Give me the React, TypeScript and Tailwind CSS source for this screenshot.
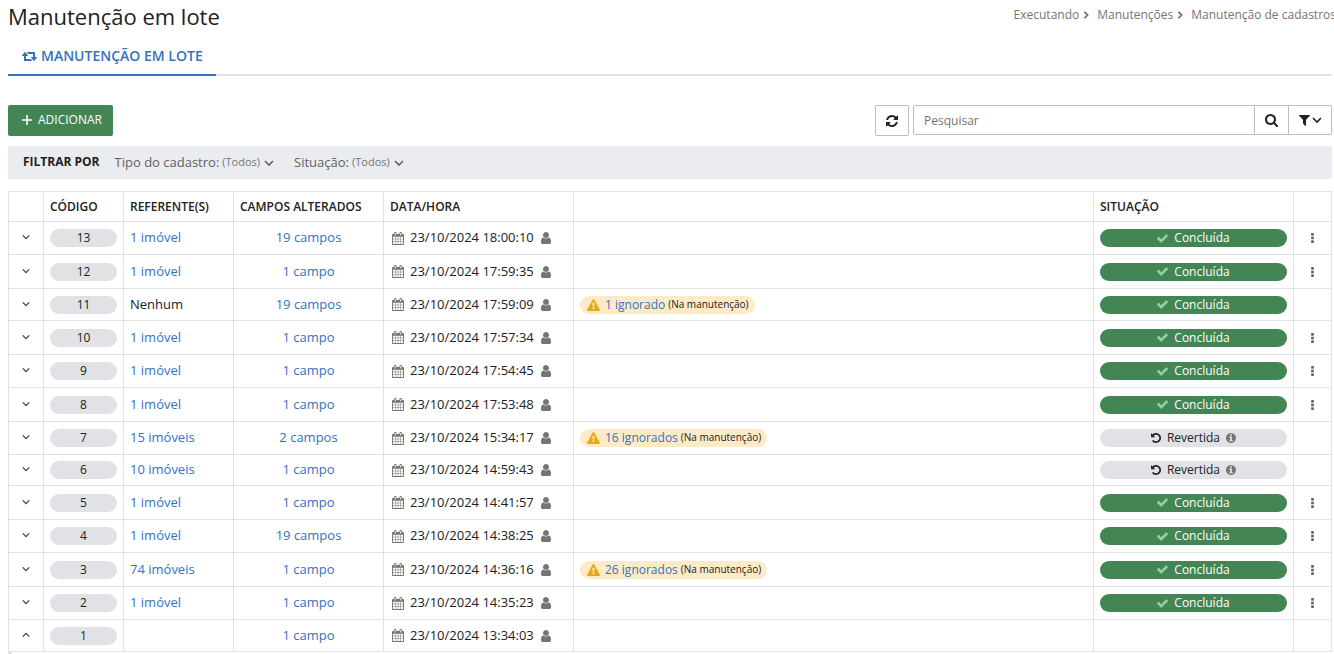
import { useState } from 'react';
import clsx from 'clsx';

const ICONS = {
  retweet: {
    box: '0 256 1920 1408',
    d: 'M1280 1632q0 13-9.5 22.5t-22.5 9.5h-960q-8 0-13.5-2t-9-7-5.5-8-3-11.5-1-11.5v-600h-192q-26 0-45-19t-19-45q0-24 15-41l320-384q19-22 49-22t49 22l320 384q15 17 15 41 0 26-19 45t-45 19h-192v384h576q16 0 25 11l160 192q7 11 7 21zm640-416q0 24-15 41l-320 384q-20 23-49 23t-49-23l-320-384q-15-17-15-41 0-26 19-45t45-19h192v-384h-576q-16 0-25-12l-160-192q-7-9-7-20 0-13 9.5-22.5t22.5-9.5h960q8 0 13.5 2t9 7 5.5 8 3 11.5 1 11.5v600h192q26 0 45 19t19 45z',
  },
  refresh: {
    box: '128 128 1536 1536',
    d: 'M1639 1056q0 5-1 7-64 268-268 434.5t-478 166.5q-146 0-282.5-55t-243.5-157l-129 129q-19 19-45 19t-45-19-19-45v-448q0-26 19-45t45-19h448q26 0 45 19t19 45-19 45l-137 137q71 66 161 102t187 36q134 0 250-65t186-179q11-17 53-117 8-23 30-23h192q13 0 22.5 9.5t9.5 22.5zm25-800v448q0 26-19 45t-45 19h-448q-26 0-45-19t-19-45 19-45l138-138q-148-137-349-137-134 0-250 65t-186 179q-11 17-53 117-8 23-30 23h-199q-13 0-22.5-9.5t-9.5-22.5v-7q65-268 270-434.5t480-166.5q146 0 284 55.5t245 156.5l130-129q19-19 45-19t45 19 19 45z',
  },
  search: {
    box: '64 128 1664 1664',
    d: 'M1216 832q0-185-131.5-316.5t-316.5-131.5-316.5 131.5-131.5 316.5 131.5 316.5 316.5 131.5 316.5-131.5 131.5-316.5zm512 832q0 52-38 90t-90 38q-54 0-90-38l-343-342q-179 124-399 124-143 0-273.5-55.5t-225-150-150-225-55.5-273.5 55.5-273.5 150-225 225-150 273.5-55.5 273.5 55.5 225 150 150 225 55.5 273.5q0 220-124 399l343 343q37 37 37 90z',
  },
  filter: {
    box: '192 256 1408 1408',
    d: 'M1595 295q17 41-14 70l-493 493v742q0 42-39 59-13 5-25 5-27 0-45-19l-256-256q-19-19-19-45v-486l-493-493q-31-29-14-70 17-39 59-39h1280q42 0 59 39z',
  },
  calendar: {
    box: '64 0 1664 1792',
    d: 'M192 1664h288v-288h-288v288zm352 0h320v-288h-320v288zm-352-352h288v-320h-288v320zm352 0h320v-320h-320v320zm-352-384h288v-288h-288v288zm736 736h320v-288h-320v288zm-384-736h320v-288h-320v288zm768 736h288v-288h-288v288zm-384-352h320v-320h-320v320zm-352-864v-288q0-13-9.5-22.5t-22.5-9.5h-64q-13 0-22.5 9.5t-9.5 22.5v288q0 13 9.5 22.5t22.5 9.5h64q13 0 22.5-9.5t9.5-22.5zm736 864h288v-320h-288v320zm-384-384h320v-288h-320v288zm384 0h288v-288h-288v288zm32-480v-288q0-13-9.5-22.5t-22.5-9.5h-64q-13 0-22.5 9.5t-9.5 22.5v288q0 13 9.5 22.5t22.5 9.5h64q13 0 22.5-9.5t9.5-22.5zm384-64v1280q0 52-38 90t-90 38h-1408q-52 0-90-38t-38-90v-1280q0-52 38-90t90-38h128v-96q0-66 47-113t113-47h64q66 0 113 47t47 113v96h384v-96q0-66 47-113t113-47h64q66 0 113 47t47 113v96h128q52 0 90 38t38 90z',
  },
  user: {
    box: '256 128 1280 1536',
    d: 'M1536 1399q0 109-62.5 187t-150.5 78h-854q-88 0-150.5-78t-62.5-187q0-85 8.5-160.5t31.5-152 58.5-131 94-89 134.5-34.5q131 128 313 128t313-128q76 0 134.5 34.5t94 89 58.5 131 31.5 152 8.5 160.5zm-256-887q0 159-112.5 271.5t-271.5 112.5-271.5-112.5-112.5-271.5 112.5-271.5 271.5-112.5 271.5 112.5 112.5 271.5z',
  },
  warning: {
    box: '0 0 1792 1664',
    d: 'M1024 1375v-190q0-14-9.5-23.5t-22.5-9.5h-192q-13 0-22.5 9.5t-9.5 23.5v190q0 14 9.5 23.5t22.5 9.5h192q13 0 22.5-9.5t9.5-23.5zm-2-374l18-459q0-12-10-19-13-11-24-11h-220q-11 0-24 11-10 7-10 21l17 457q0 10 10 16.5t24 6.5h185q14 0 23.5-6.5t10.5-16.5zm-14-934l768 1408q35 63-2 126-17 29-46.5 46t-63.5 17h-1536q-34 0-63.5-17t-46.5-46q-37-63-2-126l768-1408q17-31 47-49t65-18 65 18 47 49z',
  },
  check: {
    box: '120 330 1552 1200',
    d: 'M1671 566q0 40-28 68l-724 724-136 136q-28 28-68 28t-68-28l-136-136-362-362q-28-28-28-68t28-68l136-136q28-28 68-28t68 28l294 295 656-657q28-28 68-28t68 28l136 136q28 28 28 68z',
  },
  undo: {
    box: '128 128 1536 1536',
    d: 'M1664 896q0 156-61 298t-164 245-245 164-298 61q-172 0-327-72.5t-264-204.5q-7-10-6.5-22.5t8.5-20.5l137-138q10-9 25-9 16 2 23 12 73 95 179 147t225 52q104 0 198.5-40.5t163.5-109.5 109.5-163.5 40.5-198.5-40.5-198.5-109.5-163.5-163.5-109.5-198.5-40.5q-98 0-188 35.5t-160 101.5l137 138q31 30 14 69-17 40-59 40h-448q-26 0-45-19t-19-45v-448q0-42 40-59 39-17 69 14l130 129q107-101 244.5-156.5t284.5-55.5q156 0 298 61t245 164 164 245 61 298z',
  },
  info: {
    box: '128 128 1536 1536',
    d: 'M1152 1376v-160q0-14-9-23t-23-9h-96v-512q0-14-9-23t-23-9h-320q-14 0-23 9t-9 23v160q0 14 9 23t23 9h96v320h-96q-14 0-23 9t-9 23v160q0 14 9 23t23 9h448q14 0 23-9t9-23zm-128-896v-160q0-14-9-23t-23-9h-192q-14 0-23 9t-9 23v160q0 14 9 23t23 9h192q14 0 23-9t9-23zm640 416q0 209-103 385.5t-279.5 279.5-385.5 103-385.5-103-279.5-279.5-103-385.5 103-385.5 279.5-279.5 385.5-103 385.5 103 279.5 279.5 103 385.5z',
  },
  ellipsis: {
    box: '704 128 384 1408',
    d: 'M1088 1248v192q0 40-28 68t-68 28h-192q-40 0-68-28t-28-68v-192q0-40 28-68t68-28h192q40 0 68 28t28 68zm0-512v192q0 40-28 68t-68 28h-192q-40 0-68-28t-28-68v-192q0-40 28-68t68-28h192q40 0 68 28t28 68zm0-512v192q0 40-28 68t-68 28h-192q-40 0-68-28t-28-68v-192q0-40 28-68t68-28h192q40 0 68 28t28 68z',
  },
};

const Icon = ({ name, className }: { name: keyof typeof ICONS; className?: string }) => (
  <svg viewBox={ICONS[name].box} fill="currentColor" className={clsx('shrink-0', className)} aria-hidden="true">
    <path d={ICONS[name].d} />
  </svg>
);

const CHEVRONS = {
  down: 'M1 3l4 4 4-4',
  up: 'M1 7l4-4 4 4',
  right: 'M3 1l4 4-4 4',
};

const Chevron = ({ dir, className }: { dir: keyof typeof CHEVRONS; className?: string }) => (
  <svg viewBox="0 0 10 10" fill="none" stroke="currentColor" strokeWidth="1.6" className={clsx('shrink-0', className)} aria-hidden="true">
    <path d={CHEVRONS[dir]} />
  </svg>
);

type Row = {
  code: number;
  ref: string;
  fields: string;
  date: string;
  ignored?: string;
  status?: 'done' | 'reverted';
  menu?: boolean;
  height: string;
};

const rows: Row[] = [
  { code: 13, ref: '1 imóvel', fields: '19 campos', date: '23/10/2024 18:00:10', status: 'done', menu: true, height: 'h-[33px]' },
  { code: 12, ref: '1 imóvel', fields: '1 campo', date: '23/10/2024 17:59:35', status: 'done', menu: true, height: 'h-[34px]' },
  { code: 11, ref: 'Nenhum', fields: '19 campos', date: '23/10/2024 17:59:09', ignored: '1 ignorado', status: 'done', height: 'h-8' },
  { code: 10, ref: '1 imóvel', fields: '1 campo', date: '23/10/2024 17:57:34', status: 'done', menu: true, height: 'h-[34px]' },
  { code: 9, ref: '1 imóvel', fields: '1 campo', date: '23/10/2024 17:54:45', status: 'done', menu: true, height: 'h-[33px]' },
  { code: 8, ref: '1 imóvel', fields: '1 campo', date: '23/10/2024 17:53:48', status: 'done', menu: true, height: 'h-[34px]' },
  { code: 7, ref: '15 imóveis', fields: '2 campos', date: '23/10/2024 15:34:17', ignored: '16 ignorados', status: 'reverted', height: 'h-[33px]' },
  { code: 6, ref: '10 imóveis', fields: '1 campo', date: '23/10/2024 14:59:43', status: 'reverted', height: 'h-[31px]' },
  { code: 5, ref: '1 imóvel', fields: '1 campo', date: '23/10/2024 14:41:57', status: 'done', menu: true, height: 'h-[34px]' },
  { code: 4, ref: '1 imóvel', fields: '19 campos', date: '23/10/2024 14:38:25', status: 'done', menu: true, height: 'h-[33px]' },
  { code: 3, ref: '74 imóveis', fields: '1 campo', date: '23/10/2024 14:36:16', ignored: '26 ignorados', status: 'done', menu: true, height: 'h-[34px]' },
  { code: 2, ref: '1 imóvel', fields: '1 campo', date: '23/10/2024 14:35:23', status: 'done', menu: true, height: 'h-[33px]' },
  { code: 1, ref: '', fields: '1 campo', date: '23/10/2024 13:34:03', height: 'h-8' },
];

const StatusBadge = ({ status }: { status: 'done' | 'reverted' }) =>
  status === 'done' ? (
    <div className="flex h-[18px] items-center justify-center gap-[6px] rounded-full bg-[#438553] text-xs text-white">
      <Icon name="check" className="h-[9px] w-[11px] text-[#8fd19e]" />
      Concluída
    </div>
  ) : (
    <div className="flex h-[18px] items-center justify-center gap-[6px] rounded-full bg-[#e1e2e6] text-xs text-[#212121]">
      <Icon name="undo" className="size-[10px]" />
      Revertida
      <Icon name="info" className="size-[10px] text-[#757575]" />
    </div>
  );

const FilterSelect = ({ id, label }: { id: string; label: string }) => (
  <div className="flex items-center text-[#616161]">
    <label htmlFor={id} className="text-[13px]">{label}</label>
    <select id={id} className="field-sizing-content ml-[3px] appearance-none bg-transparent text-[11px] text-[#757575]">
      <option>(Todos)</option>
    </select>
    <Chevron dir="down" className="ml-1 size-[10px]" />
  </div>
);

const cell = 'border border-[#e1e2e6] px-[6px] py-0';
const link = 'text-[#3472bd] hover:underline';
const toolButton = 'flex items-center justify-center border border-[#bdbdbd] bg-white text-[#212121]';

export default function App() {
  const [opened, setOpened] = useState<number[]>([1]);
  const [term, setTerm] = useState('');

  const toggle = (code: number) =>
    setOpened(list => (list.includes(code) ? list.filter(c => c !== code) : [...list, code]));

  return (
    <main className="overflow-x-hidden bg-white pr-[2px] pl-2 font-['Open_Sans',sans-serif] text-[13px] text-[#212121]">
      <header className="flex h-[37px] justify-between">
        <h1 className="text-[22px] leading-8">Manutenção em lote</h1>
        <nav aria-label="Trilha" className="-mr-1 flex h-[30px] items-center text-xs whitespace-nowrap text-[#757575]">
          <a href="#executando">Executando</a>
          <Chevron dir="right" className="mr-[7px] ml-[3px] size-2 stroke-[2.2]" />
          <a href="#manutencoes">Manutenções</a>
          <Chevron dir="right" className="mr-[7px] ml-[3px] size-2 stroke-[2.2]" />
          <a href="#cadastros">Manutenção de cadastros</a>
        </nav>
      </header>

      {/* Tabs */}
      <div role="tablist" className="flex border-b-2 border-[#e1e2e6]">
        <button
          role="tab"
          aria-selected="true"
          className="-mb-[2px] flex h-[39px] items-center gap-1 border-b-2 border-[#3472bd] pr-[13px] pl-[14px] text-sm font-semibold text-[#3472bd]"
        >
          <Icon name="retweet" className="h-[11px] w-[15px]" />
          MANUTENÇÃO EM LOTE
        </button>
      </div>

      {/* Toolbar */}
      <div className="mt-[29px] flex items-start">
        <button className="flex h-[31px] items-center gap-[6px] rounded-xs bg-[#438553] pr-[11px] pb-[2px] pl-[14px] text-xs text-white">
          <svg viewBox="0 0 10 10" className="size-[10px]" stroke="currentColor" strokeWidth="1.6" aria-hidden="true">
            <path d="M5 0v10M0 5h10" />
          </svg>
          ADICIONAR
        </button>
        <button aria-label="Atualizar" className={clsx(toolButton, 'ml-auto h-[31px] w-[34px] rounded-xs')}>
          <Icon name="refresh" className="size-3" />
        </button>
        <div className="ml-1 flex h-[30px] w-[419px]">
          <input
            type="text"
            aria-label="Pesquisar"
            placeholder="Pesquisar"
            value={term}
            onChange={e => setTerm(e.target.value)}
            className="min-w-0 flex-1 rounded-l-xs border border-[#bdbdbd] px-[10px] pt-[2px] text-xs outline-none placeholder:text-[#757575]"
          />
          <button aria-label="Buscar" className={clsx(toolButton, '-ml-px w-[35px]')}>
            <Icon name="search" className="size-[13px]" />
          </button>
          <button aria-label="Filtros" className={clsx(toolButton, '-ml-px w-11 gap-[2px] rounded-r-xs')}>
            <Icon name="filter" className="size-[11px]" />
            <Chevron dir="down" className="size-[10px]" />
          </button>
        </div>
      </div>

      {/* Filters */}
      <div className="mt-[10px] flex h-[33px] items-center bg-[#ebecf0] pl-[15px]">
        <span className="mr-[15px] pb-[2px] text-xs font-bold">FILTRAR POR</span>
        <div className="flex gap-5">
          <FilterSelect id="tipo" label="Tipo do cadastro:" />
          <FilterSelect id="situacao" label="Situação:" />
        </div>
      </div>

      <table className="mt-3 w-full table-fixed border-collapse">
        <colgroup>
          <col className="w-[35px]" />
          <col className="w-[80px]" />
          <col className="w-[110px]" />
          <col className="w-[150px]" />
          <col className="w-[190px]" />
          <col />
          <col className="w-[200px]" />
          <col className="w-[38px]" />
        </colgroup>
        <thead>
          <tr className="h-[30px] text-left text-xs whitespace-nowrap">
            <th className={cell} />
            <th className={clsx(cell, 'font-semibold')}>CÓDIGO</th>
            <th className={clsx(cell, 'font-semibold')}>REFERENTE(S)</th>
            <th className={clsx(cell, 'font-semibold')}>CAMPOS ALTERADOS</th>
            <th className={clsx(cell, 'font-semibold')}>DATA/HORA</th>
            <th className={cell} />
            <th className={clsx(cell, 'font-semibold')}>SITUAÇÃO</th>
            <th className={cell} />
          </tr>
        </thead>
        <tbody>
          {rows.map(row => {
            const isOpen = opened.includes(row.code);

            return (
              <tr key={row.code} className={row.height}>
                <td className={cell}>
                  <button
                    aria-label={`Detalhes ${row.code}`}
                    aria-expanded={isOpen}
                    onClick={() => toggle(row.code)}
                    className="flex w-full justify-center pb-[2px] text-[#424242]"
                  >
                    <Chevron dir={isOpen ? 'up' : 'down'} className="size-2" />
                  </button>
                </td>
                <td className={cell}>
                  <div className="h-[18px] rounded-full bg-[#e1e2e6] text-center text-xs leading-[18px]">{row.code}</div>
                </td>
                <td className={cell}>
                  {row.ref === 'Nenhum' ? row.ref : row.ref && <a href={`#ref-${row.code}`} className={link}>{row.ref}</a>}
                </td>
                <td className={clsx(cell, 'text-center')}>
                  <a href={`#campos-${row.code}`} className={link}>{row.fields}</a>
                </td>
                <td className={cell}>
                  <div className="flex items-center whitespace-nowrap">
                    <Icon name="calendar" className="mr-[6px] ml-[2px] h-[13px] w-3 text-[#757575]" />
                    {row.date}
                    <Icon name="user" className="ml-[7px] h-3 w-[10px] text-[#757575]" />
                  </div>
                </td>
                <td className={cell}>
                  {row.ignored && (
                    <div className="flex h-[18px] w-fit items-center rounded-full bg-[#fdebc8] px-[6px] text-xs whitespace-nowrap">
                      <Icon name="warning" className="mr-[5px] ml-px h-3 w-[13px] text-[#e6a817]" />
                      <a href={`#ignorados-${row.code}`} className={link}>{row.ignored}</a>
                      <span className="ml-[3px] text-[10px]">(Na manutenção)</span>
                    </div>
                  )}
                </td>
                <td className={cell}>{row.status && <StatusBadge status={row.status} />}</td>
                <td className={cell}>
                  {row.menu && (
                    <button aria-label={`Opções ${row.code}`} className="flex w-full justify-center text-[#616161]">
                      <Icon name="ellipsis" className="h-[10px] w-[3px]" />
                    </button>
                  )}
                </td>
              </tr>
            );
          })}
        </tbody>
      </table>
      {opened.includes(1) && <div className="h-[2px] border-l-4 border-[#e1e2e6]" />}
    </main>
  );
}
